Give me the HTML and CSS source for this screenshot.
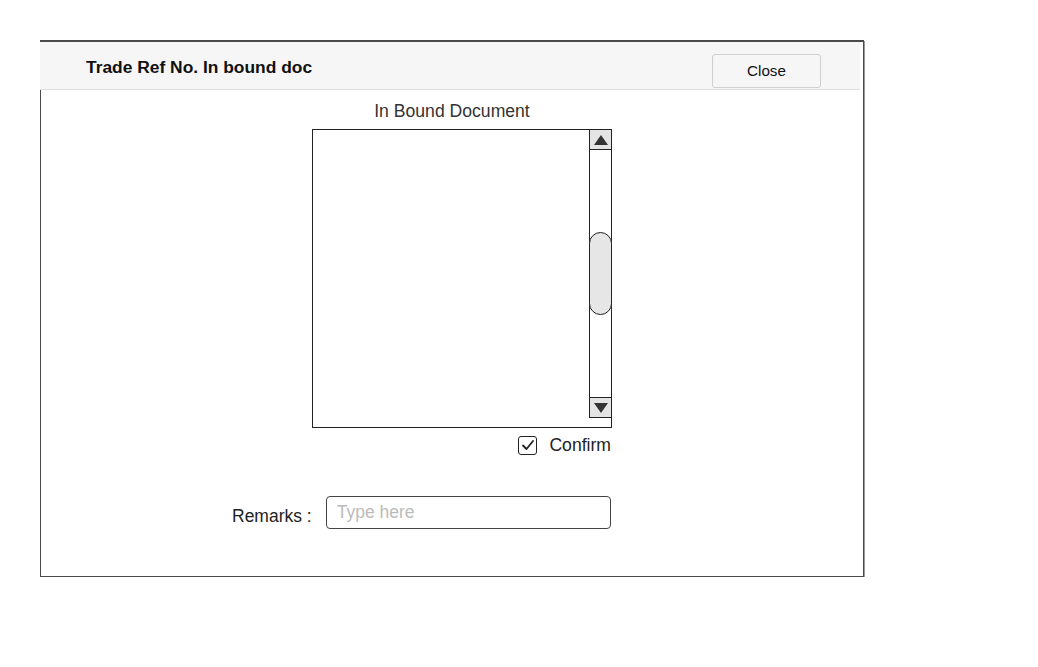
FILE: index.html
```html
<!DOCTYPE html>
<html>
<head>
<meta charset="utf-8">
<link rel="stylesheet" href="styles.css">
</head>
<body>
<div class="dialog">
  <div class="header">
    <div class="title">Trade Ref No. In bound doc</div>
    <button class="close">Close</button>
  </div>
  <div class="content">
    <div class="doc-title">In Bound Document</div>
    <div class="doc-col">
      <div class="listbox">
        <div class="list-area"></div>
        <div class="scrollbar">
          <div class="sb-btn sb-up"><svg width="14" height="10" viewBox="0 0 14 10"><path d="M7 0 L14 10 L0 10 Z" fill="#333"/></svg></div>
          <div class="sb-track"><div class="sb-thumb"></div></div>
          <div class="sb-btn sb-down"><svg width="14" height="10" viewBox="0 0 14 10"><path d="M0 0 L14 0 L7 10 Z" fill="#333"/></svg></div>
          <div class="sb-tail"></div>
        </div>
      </div>
      <div class="confirm-row">
        <span class="checkbox"><svg width="14" height="12" viewBox="0 0 14 12"><path d="M2 6.5 L5.5 10 L12 2" fill="none" stroke="#222" stroke-width="1.8" stroke-linecap="round" stroke-linejoin="round"/></svg></span>
        <span class="confirm-label">Confirm</span>
      </div>
    </div>
    <div class="remarks-row">
      <span class="remarks-label">Remarks :</span>
      <input class="remarks-input" type="text" placeholder="Type here">
    </div>
  </div>
</div>
</body>
</html>
```

FILE: styles.css
```css
html, body {
  margin: 0;
  padding: 0;
  background: #fff;
  font-family: "Liberation Sans", Arial, sans-serif;
}

.dialog {
  margin: 40px 0 0 40px;
  width: 822px;
  height: 534px;
  border: 1px solid #4a4a4a;
  border-top-width: 2px;
  box-shadow: 1px 1px 0 #9a9a9a;
  background: #fff;
  display: flex;
  flex-direction: column;
}

.header {
  margin-left: -1px;
  width: 820px;
  height: 47px;
  background: #f6f6f6;
  border-bottom: 1px solid #dedede;
  display: flex;
  align-items: center;
  justify-content: space-between;
  box-sizing: content-box;
}

.title {
  margin-left: 46px;
  font-size: 17.4px;
  font-weight: bold;
  color: #111;
  margin-top: 4px;
}

.close {
  margin-right: 39px;
  margin-top: 10px;
  width: 109px;
  height: 34px;
  border: 1px solid #cfcfcf;
  border-radius: 3px;
  background: #f6f6f6;
  font-family: "Liberation Sans", Arial, sans-serif;
  font-size: 15.2px;
  color: #111;
  padding: 0;
}

.content {
  display: flex;
  flex-direction: column;
}

.doc-title {
  text-align: center;
  font-size: 17.6px;
  color: #333;
  line-height: 20px;
  margin-top: 11px;
}

.doc-col {
  margin-left: 271px;
  width: 300px;
  display: flex;
  flex-direction: column;
  align-items: flex-end;
}

.listbox {
  margin-top: 8px;
  width: 298px;
  height: 297px;
  border: 1px solid #222;
  display: flex;
}

.list-area {
  flex: 1;
}

.scrollbar {
  width: 22px;
  display: flex;
  flex-direction: column;
}

.sb-btn {
  height: 19px;
  background: #e4e4e4;
  border-left: 1px solid #222;
  display: flex;
  align-items: center;
  justify-content: center;
}

.sb-up {
  border-bottom: 1px solid #222;
}

.sb-down {
  border-top: 1px solid #222;
  border-bottom: 1px solid #222;
}

.sb-track {
  flex: 1;
  border-left: 1px solid #222;
  background: #fff;
}

.sb-thumb {
  margin-top: 82px;
  margin-left: -1px;
  height: 81px;
  width: 21px;
  border: 1px solid #222;
  border-radius: 12px;
  background: #e6e6e6;
}

.sb-tail {
  height: 9px;
}

.confirm-row {
  margin-top: 7px;
  display: flex;
  align-items: center;
  gap: 12px;
  height: 20px;
}

.checkbox {
  box-sizing: border-box;
  width: 19px;
  height: 19px;
  border: 1.5px solid #222;
  border-radius: 3px;
  display: flex;
  align-items: center;
  justify-content: center;
}

.confirm-label {
  font-size: 17.6px;
  color: #222;
  margin-right: 1px;
}

.remarks-row {
  margin-top: 41px;
  margin-left: 191px;
  display: flex;
  align-items: center;
  gap: 14px;
}

.remarks-label {
  font-size: 17.5px;
  color: #222;
  margin-top: 7px;
}

.remarks-input {
  width: 285px;
  height: 33px;
  box-sizing: border-box;
  border: 1px solid #444;
  border-radius: 4px;
  padding: 0 10px;
  font-family: "Liberation Sans", Arial, sans-serif;
  font-size: 17.5px;
  color: #222;
  outline: none;
}

.remarks-input::placeholder {
  color: #bbb;
}
```
